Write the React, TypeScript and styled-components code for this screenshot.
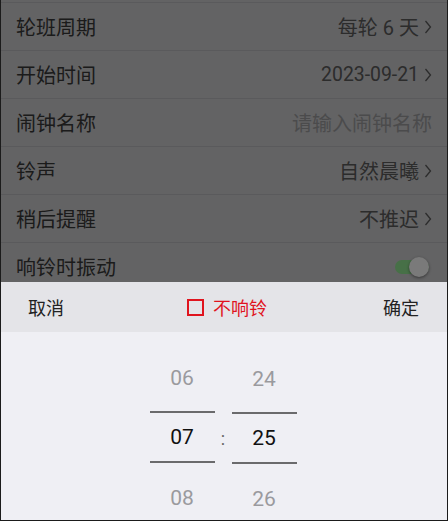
import React from 'react';
import styled, { createGlobalStyle } from 'styled-components';

const Global = createGlobalStyle`
  html, body { margin: 0; padding: 0; background: #636365; }
  body { font-family: Roboto, "Noto Sans CJK SC", sans-serif; }
`;

const Screen = styled.div`
  position: relative;
  width: 448px;
  height: 521px;
  box-sizing: border-box;
  border: 1px solid #1b1b1b;
  border-top: none;
  background: #c6c6c8;
  overflow: hidden;
  padding-top: 2px;
`;

const List = styled.div`
  border-top: 1px solid #b4b4b8;
`;

const Row = styled.div`
  height: 47px;
  border-bottom: 1px solid #b4b4b8;
  padding: 0 15px;
  display: flex;
  align-items: center;
  justify-content: space-between;
`;

const Label = styled.span`
  font-size: 20px;
  color: #363636;
  font-family: "Noto Sans CJK SC", sans-serif;
`;

const Value = styled.span<{ $placeholder?: boolean; $numeric?: boolean }>`
  display: flex;
  align-items: center;
  font-size: ${p => (p.$numeric ? '19.4px' : '20px')};
  color: ${p => (p.$placeholder ? '#979799' : '#585858')};
  font-family: Roboto, "Noto Sans CJK SC", sans-serif;
`;

const Chevron = styled.svg`
  margin-left: 5px;
  width: 8px;
  height: 14px;
`;

const Switch = styled.div`
  position: relative;
  width: 34px;
  height: 20px;
  margin-right: 3px;
  display: flex;
  align-items: center;
`;

const Track = styled.div`
  width: 34px;
  height: 14px;
  border-radius: 7px;
  background: #8fe08f;
`;

const Knob = styled.div`
  position: absolute;
  right: 0;
  top: 0;
  width: 20px;
  height: 20px;
  border-radius: 50%;
  background: #f4f4f4;
  box-shadow: 0 1px 3px rgba(0, 0, 0, 0.45);
`;

const Overlay = styled.div`
  position: absolute;
  inset: 0;
  background: rgba(0, 0, 0, 0.5);
`;

const Sheet = styled.div`
  position: absolute;
  left: 0;
  right: 0;
  bottom: 0;
  height: 238px;
  display: flex;
  flex-direction: column;
`;

const Toolbar = styled.div`
  height: 50px;
  flex: none;
  background: #e4e4e8;
  display: grid;
  grid-template-columns: 1fr auto 1fr;
  align-items: center;
  padding: 0 28px 0 27px;
  font-family: "Noto Sans CJK SC", sans-serif;
  font-size: 18px;
`;

const Action = styled.span<{ $end?: boolean }>`
  color: #222;
  justify-self: ${p => (p.$end ? 'end' : 'start')};
`;

const Mute = styled.label`
  display: flex;
  align-items: center;
  color: #e0141e;
  padding-left: 7px;
`;

const Box = styled.span`
  width: 17px;
  height: 17px;
  box-sizing: border-box;
  border: 2px solid #e0141e;
  margin-right: 9px;
`;

const Picker = styled.div`
  flex: 1;
  background: #efeff4;
  display: flex;
  justify-content: center;
  overflow: hidden;
  padding-right: 2px;
`;

const Column = styled.div`
  width: 65px;
  display: flex;
  flex-direction: column;
  padding-top: 17px;
  font-family: Roboto, sans-serif;
  font-size: 21px;
`;

const Dot = styled.span`
  width: 2px;
  height: 1px;
  background: #666;
  margin: 1px 0 -2px 28px;
`;

const Item = styled.div`
  flex: none;
  height: 60px;
  display: flex;
  align-items: center;
  justify-content: center;
  color: #9a9a9e;
`;

const Selected = styled.div`
  flex: none;
  height: 52px;
  box-sizing: border-box;
  margin: 3px 0 5px;
  border-top: 2px solid #6a6a6c;
  border-bottom: 2px solid #6a6a6c;
  display: flex;
  align-items: center;
  justify-content: center;
  color: #111;
`;

const Colon = styled.div`
  width: 17px;
  height: 52px;
  margin-top: 80px;
  display: flex;
  align-items: center;
  justify-content: center;
  font-family: Roboto, sans-serif;
  font-size: 18px;
  color: #666;
`;

const ChevronIcon = () => (
  <Chevron viewBox="0 0 8 14">
    <polyline points="1.5,1 6.5,7 1.5,13" fill="none" stroke="#585858" strokeWidth="1.3" />
  </Chevron>
);

const rows: { label: string; value?: string; placeholder?: boolean; numeric?: boolean; toggle?: boolean }[] = [
  { label: '轮班周期', value: '每轮 6 天' },
  { label: '开始时间', value: '2023-09-21', numeric: true },
  { label: '闹钟名称', value: '请输入闹钟名称', placeholder: true },
  { label: '铃声', value: '自然晨曦' },
  { label: '稍后提醒', value: '不推迟' },
  { label: '响铃时振动', toggle: true },
];

export default function App() {
  return (
    <>
      <Global />
      <Screen>
        <List>
          {rows.map(r => (
            <Row key={r.label}>
              <Label>{r.label}</Label>
              {r.toggle ? (
                <Switch>
                  <Track />
                  <Knob />
                </Switch>
              ) : (
                <Value $placeholder={r.placeholder} $numeric={r.numeric}>
                  {r.value}
                  {!r.placeholder && <ChevronIcon />}
                </Value>
              )}
            </Row>
          ))}
        </List>
        <Overlay />
        <Sheet>
          <Toolbar>
            <Action>取消</Action>
            <Mute>
              <Box />
              不响铃
            </Mute>
            <Action $end>确定</Action>
          </Toolbar>
          <Picker>
            <Column>
              <Dot />
              <Item>06</Item>
              <Selected>07</Selected>
              <Item>08</Item>
            </Column>
            <Colon>:</Colon>
            <Column>
              <Item>24</Item>
              <Selected>25</Selected>
              <Item>26</Item>
            </Column>
          </Picker>
        </Sheet>
      </Screen>
    </>
  );
}
